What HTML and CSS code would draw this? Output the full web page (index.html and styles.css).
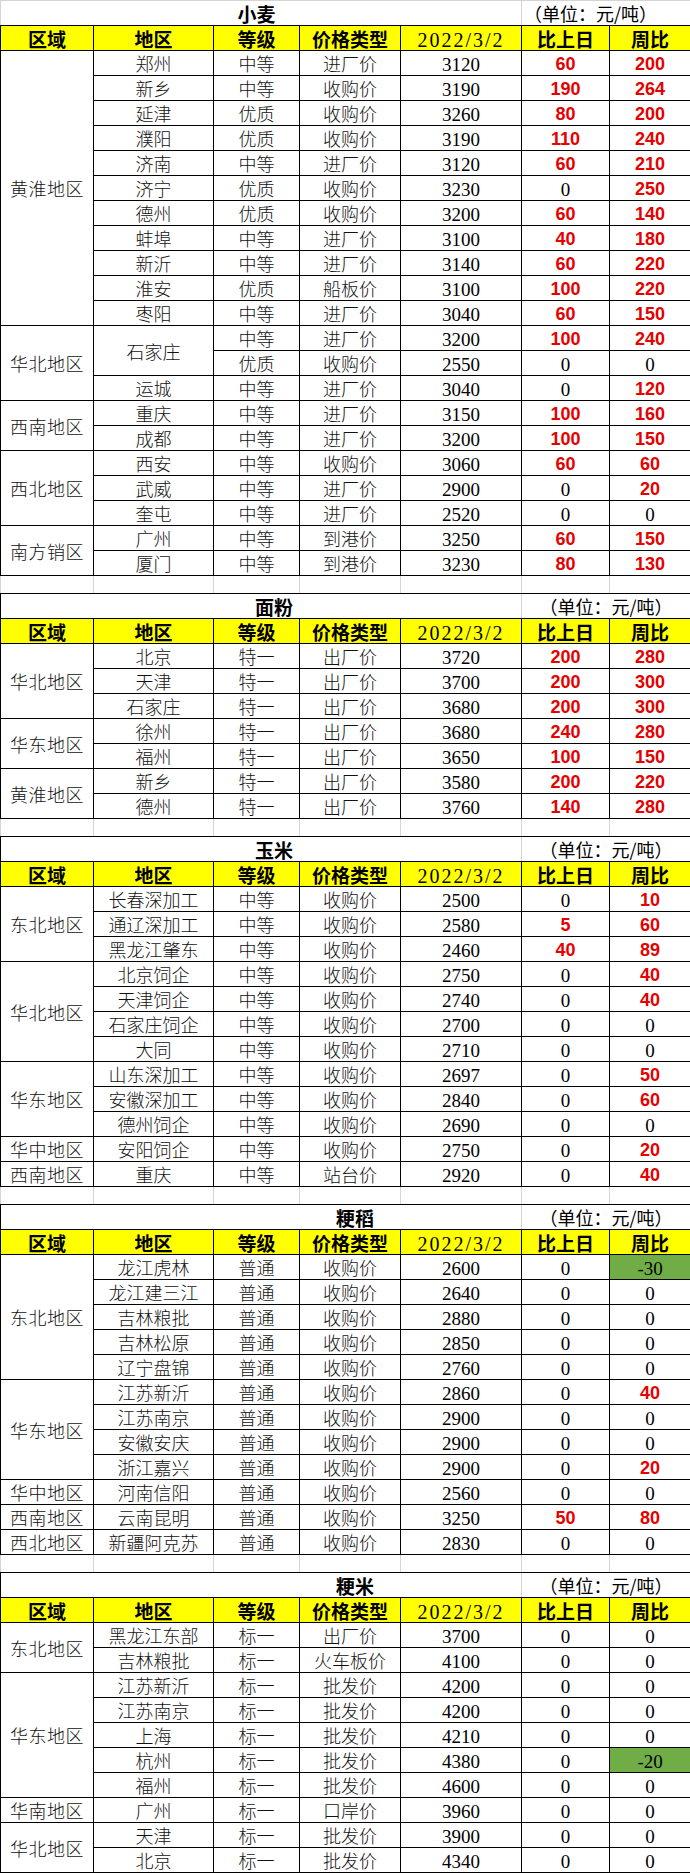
FILE: index.html
```html
<!DOCTYPE html>
<html lang="zh-CN">
<head>
<meta charset="utf-8">
<title>粮食价格</title>
<link rel="stylesheet" href="styles.css">
</head>
<body>
<table class="sheet">
<colgroup><col class="c1"><col class="c2"><col class="c3"><col class="c4"><col class="c5"><col class="c6"><col class="c7"></colgroup>
<tbody>
<tr class="title first"><td class="t t1" colspan="5">小麦</td><td class="u ul" colspan="2">（单位：元/吨）</td></tr>
<tr class="hd"><td>区域</td><td>地区</td><td>等级</td><td>价格类型</td><td class="hdate">2022/3/2</td><td>比上日</td><td>周比</td></tr>
<tr><td class="r" rowspan="11">黄淮地区</td><td>郑州</td><td>中等</td><td>进厂价</td><td class="n">3120</td><td class="up">60</td><td class="up">200</td></tr>
<tr><td>新乡</td><td>中等</td><td>收购价</td><td class="n">3190</td><td class="up">190</td><td class="up">264</td></tr>
<tr><td>延津</td><td>优质</td><td>收购价</td><td class="n">3260</td><td class="up">80</td><td class="up">200</td></tr>
<tr><td>濮阳</td><td>优质</td><td>收购价</td><td class="n">3190</td><td class="up">110</td><td class="up">240</td></tr>
<tr><td>济南</td><td>中等</td><td>进厂价</td><td class="n">3120</td><td class="up">60</td><td class="up">210</td></tr>
<tr><td>济宁</td><td>优质</td><td>收购价</td><td class="n">3230</td><td class="n">0</td><td class="up">250</td></tr>
<tr><td>德州</td><td>优质</td><td>收购价</td><td class="n">3200</td><td class="up">60</td><td class="up">140</td></tr>
<tr><td>蚌埠</td><td>中等</td><td>进厂价</td><td class="n">3100</td><td class="up">40</td><td class="up">180</td></tr>
<tr><td>新沂</td><td>中等</td><td>进厂价</td><td class="n">3140</td><td class="up">60</td><td class="up">220</td></tr>
<tr><td>淮安</td><td>优质</td><td>船板价</td><td class="n">3100</td><td class="up">100</td><td class="up">220</td></tr>
<tr><td>枣阳</td><td>中等</td><td>进厂价</td><td class="n">3040</td><td class="up">60</td><td class="up">150</td></tr>
<tr><td class="r" rowspan="3">华北地区</td><td rowspan="2">石家庄</td><td>中等</td><td>进厂价</td><td class="n">3200</td><td class="up">100</td><td class="up">240</td></tr>
<tr><td>优质</td><td>收购价</td><td class="n">2550</td><td class="n">0</td><td class="n">0</td></tr>
<tr><td>运城</td><td>中等</td><td>进厂价</td><td class="n">3040</td><td class="n">0</td><td class="up">120</td></tr>
<tr><td class="r" rowspan="2">西南地区</td><td>重庆</td><td>中等</td><td>进厂价</td><td class="n">3150</td><td class="up">100</td><td class="up">160</td></tr>
<tr><td>成都</td><td>中等</td><td>进厂价</td><td class="n">3200</td><td class="up">100</td><td class="up">150</td></tr>
<tr><td class="r" rowspan="3">西北地区</td><td>西安</td><td>中等</td><td>收购价</td><td class="n">3060</td><td class="up">60</td><td class="up">60</td></tr>
<tr><td>武威</td><td>中等</td><td>进厂价</td><td class="n">2900</td><td class="n">0</td><td class="up">20</td></tr>
<tr><td>奎屯</td><td>中等</td><td>进厂价</td><td class="n">2520</td><td class="n">0</td><td class="n">0</td></tr>
<tr><td class="r" rowspan="2">南方销区</td><td>广州</td><td>中等</td><td>到港价</td><td class="n">3250</td><td class="up">60</td><td class="up">150</td></tr>
<tr><td>厦门</td><td>中等</td><td>到港价</td><td class="n">3230</td><td class="up">80</td><td class="up">130</td></tr>
<tr class="blank"><td></td><td></td><td></td><td></td><td></td><td></td><td></td></tr>

<tr class="title"><td class="t t2" colspan="5">面粉</td><td class="u" colspan="2">（单位：元/吨）</td></tr>
<tr class="hd"><td>区域</td><td>地区</td><td>等级</td><td>价格类型</td><td class="hdate">2022/3/2</td><td>比上日</td><td>周比</td></tr>
<tr><td class="r" rowspan="3">华北地区</td><td>北京</td><td>特一</td><td>出厂价</td><td class="n">3720</td><td class="up">200</td><td class="up">280</td></tr>
<tr><td>天津</td><td>特一</td><td>出厂价</td><td class="n">3700</td><td class="up">200</td><td class="up">300</td></tr>
<tr><td>石家庄</td><td>特一</td><td>出厂价</td><td class="n">3680</td><td class="up">200</td><td class="up">300</td></tr>
<tr><td class="r" rowspan="2">华东地区</td><td>徐州</td><td>特一</td><td>出厂价</td><td class="n">3680</td><td class="up">240</td><td class="up">280</td></tr>
<tr><td>福州</td><td>特一</td><td>出厂价</td><td class="n">3650</td><td class="up">100</td><td class="up">150</td></tr>
<tr><td class="r" rowspan="2">黄淮地区</td><td>新乡</td><td>特一</td><td>出厂价</td><td class="n">3580</td><td class="up">200</td><td class="up">220</td></tr>
<tr><td>德州</td><td>特一</td><td>出厂价</td><td class="n">3760</td><td class="up">140</td><td class="up">280</td></tr>
<tr class="blank"><td></td><td></td><td></td><td></td><td></td><td></td><td></td></tr>

<tr class="title"><td class="t t2" colspan="5">玉米</td><td class="u" colspan="2">（单位：元/吨）</td></tr>
<tr class="hd"><td>区域</td><td>地区</td><td>等级</td><td>价格类型</td><td class="hdate">2022/3/2</td><td>比上日</td><td>周比</td></tr>
<tr><td class="r" rowspan="3">东北地区</td><td>长春深加工</td><td>中等</td><td>收购价</td><td class="n">2500</td><td class="n">0</td><td class="up">10</td></tr>
<tr><td>通辽深加工</td><td>中等</td><td>收购价</td><td class="n">2580</td><td class="up">5</td><td class="up">60</td></tr>
<tr><td>黑龙江肇东</td><td>中等</td><td>收购价</td><td class="n">2460</td><td class="up">40</td><td class="up">89</td></tr>
<tr><td class="r" rowspan="4">华北地区</td><td>北京饲企</td><td>中等</td><td>收购价</td><td class="n">2750</td><td class="n">0</td><td class="up">40</td></tr>
<tr><td>天津饲企</td><td>中等</td><td>收购价</td><td class="n">2740</td><td class="n">0</td><td class="up">40</td></tr>
<tr><td>石家庄饲企</td><td>中等</td><td>收购价</td><td class="n">2700</td><td class="n">0</td><td class="n">0</td></tr>
<tr><td>大同</td><td>中等</td><td>收购价</td><td class="n">2710</td><td class="n">0</td><td class="n">0</td></tr>
<tr><td class="r" rowspan="3">华东地区</td><td>山东深加工</td><td>中等</td><td>收购价</td><td class="n">2697</td><td class="n">0</td><td class="up">50</td></tr>
<tr><td>安徽深加工</td><td>中等</td><td>收购价</td><td class="n">2840</td><td class="n">0</td><td class="up">60</td></tr>
<tr><td>德州饲企</td><td>中等</td><td>收购价</td><td class="n">2690</td><td class="n">0</td><td class="n">0</td></tr>
<tr><td class="r">华中地区</td><td>安阳饲企</td><td>中等</td><td>收购价</td><td class="n">2750</td><td class="n">0</td><td class="up">20</td></tr>
<tr><td class="r">西南地区</td><td>重庆</td><td>中等</td><td>站台价</td><td class="n">2920</td><td class="n">0</td><td class="up">40</td></tr>
<tr class="blank"><td></td><td></td><td></td><td></td><td></td><td></td><td></td></tr>

<tr class="title"><td class="t t3" colspan="5">粳稻</td><td class="u" colspan="2">（单位：元/吨）</td></tr>
<tr class="hd"><td>区域</td><td>地区</td><td>等级</td><td>价格类型</td><td class="hdate">2022/3/2</td><td>比上日</td><td>周比</td></tr>
<tr><td class="r" rowspan="5">东北地区</td><td>龙江虎林</td><td>普通</td><td>收购价</td><td class="n">2600</td><td class="n">0</td><td class="n dn">-30</td></tr>
<tr><td>龙江建三江</td><td>普通</td><td>收购价</td><td class="n">2640</td><td class="n">0</td><td class="n">0</td></tr>
<tr><td>吉林粮批</td><td>普通</td><td>收购价</td><td class="n">2880</td><td class="n">0</td><td class="n">0</td></tr>
<tr><td>吉林松原</td><td>普通</td><td>收购价</td><td class="n">2850</td><td class="n">0</td><td class="n">0</td></tr>
<tr><td>辽宁盘锦</td><td>普通</td><td>收购价</td><td class="n">2760</td><td class="n">0</td><td class="n">0</td></tr>
<tr><td class="r" rowspan="4">华东地区</td><td>江苏新沂</td><td>普通</td><td>收购价</td><td class="n">2860</td><td class="n">0</td><td class="up">40</td></tr>
<tr><td>江苏南京</td><td>普通</td><td>收购价</td><td class="n">2900</td><td class="n">0</td><td class="n">0</td></tr>
<tr><td>安徽安庆</td><td>普通</td><td>收购价</td><td class="n">2900</td><td class="n">0</td><td class="n">0</td></tr>
<tr><td>浙江嘉兴</td><td>普通</td><td>收购价</td><td class="n">2900</td><td class="n">0</td><td class="up">20</td></tr>
<tr><td class="r">华中地区</td><td>河南信阳</td><td>普通</td><td>收购价</td><td class="n">2560</td><td class="n">0</td><td class="n">0</td></tr>
<tr><td class="r">西南地区</td><td>云南昆明</td><td>普通</td><td>收购价</td><td class="n">3250</td><td class="up">50</td><td class="up">80</td></tr>
<tr><td class="r">西北地区</td><td>新疆阿克苏</td><td>普通</td><td>收购价</td><td class="n">2830</td><td class="n">0</td><td class="n">0</td></tr>
<tr class="blank"><td></td><td></td><td></td><td></td><td></td><td></td><td></td></tr>

<tr class="title"><td class="t t3" colspan="5">粳米</td><td class="u" colspan="2">（单位：元/吨）</td></tr>
<tr class="hd"><td>区域</td><td>地区</td><td>等级</td><td>价格类型</td><td class="hdate">2022/3/2</td><td>比上日</td><td>周比</td></tr>
<tr><td class="r" rowspan="2">东北地区</td><td>黑龙江东部</td><td>标一</td><td>出厂价</td><td class="n">3700</td><td class="n">0</td><td class="n">0</td></tr>
<tr><td>吉林粮批</td><td>标一</td><td>火车板价</td><td class="n">4100</td><td class="n">0</td><td class="n">0</td></tr>
<tr><td class="r" rowspan="5">华东地区</td><td>江苏新沂</td><td>标一</td><td>批发价</td><td class="n">4200</td><td class="n">0</td><td class="n">0</td></tr>
<tr><td>江苏南京</td><td>标一</td><td>批发价</td><td class="n">4200</td><td class="n">0</td><td class="n">0</td></tr>
<tr><td>上海</td><td>标一</td><td>批发价</td><td class="n">4210</td><td class="n">0</td><td class="n">0</td></tr>
<tr><td>杭州</td><td>标一</td><td>批发价</td><td class="n">4380</td><td class="n">0</td><td class="n dn">-20</td></tr>
<tr><td>福州</td><td>标一</td><td>批发价</td><td class="n">4600</td><td class="n">0</td><td class="n">0</td></tr>
<tr><td class="r">华南地区</td><td>广州</td><td>标一</td><td>口岸价</td><td class="n">3960</td><td class="n">0</td><td class="n">0</td></tr>
<tr><td class="r" rowspan="2">华北地区</td><td>天津</td><td>标一</td><td>批发价</td><td class="n">3900</td><td class="n">0</td><td class="n">0</td></tr>
<tr><td>北京</td><td>标一</td><td>批发价</td><td class="n">4340</td><td class="n">0</td><td class="n">0</td></tr>
</tbody>
</table>
</body>
</html>
```
FILE: styles.css
```css
html, body {
  margin: 0;
  padding: 0;
  background: #ffffff;
}

body {
  width: 690px;
  font-family: "Noto Sans CJK SC", sans-serif;
  font-size: 18px;
  color: #000000;
}

.sheet {
  width: 690px;
  border-collapse: collapse;
  table-layout: fixed;
}

.c1 { width: 93px; }
.c2 { width: 120px; }
.c3 { width: 86px; }
.c4 { width: 101px; }
.c5 { width: 121px; }
.c6 { width: 88px; }
.c7 { width: 81px; }

.sheet tr {
  height: 25px;
}

.sheet td {
  padding: 0;
  border: 1px solid #000000;
  text-align: center;
  vertical-align: middle;
  line-height: 1;
  white-space: nowrap;
  overflow: hidden;
  font-weight: 300;
  color: #111111;
}

.sheet td.r {
  letter-spacing: 0.5px;
}

.sheet td.n {
  font-family: "Liberation Serif", serif;
  font-weight: 400;
  font-size: 19px;
  padding-top: 3px;
  color: #000000;
}

.sheet td.up {
  font-family: "Liberation Sans", sans-serif;
  font-weight: 700;
  font-size: 18px;
  color: #e60000;
  padding-top: 2px;
}

.sheet td.dn {
  background: #70ad47;
}

/* header */
.hd td {
  background: #ffff00;
  font-weight: 700;
  font-size: 19px;
  color: #000000;
}

.hd td.hdate {
  font-family: "Liberation Serif", serif;
  font-weight: 400;
  font-size: 20px;
  letter-spacing: 2px;
  padding-top: 3px;
}

/* title rows */
.title td {
  border-left: 1px solid #000000;
  border-right: 1px solid #000000;
  border-top: 1px solid #000000;
  background: #ffffff;
  color: #000000;
}

.title td.t {
  font-weight: 700;
  font-size: 19px;
  border-right: 1px solid #d4d4d4;
}

.title td.t1 {
  padding-right: 9px;
}

.title td.t2 {
  padding-left: 26px;
}

.title td.t3 {
  padding-left: 188px;
}

.title td.u {
  font-size: 18px;
  font-weight: 400;
}

.title td.ul {
  text-align: left;
  padding-left: 2px;
}

.title.first td {
  border-top: 1px solid #d4d4d4;
}

.title.first td.t {
  border-left: 1px solid #d4d4d4;
}

/* blank spacer rows */
.sheet tr.blank {
  height: 18px;
}

.blank td {
  border-left: 1px solid #d4d4d4;
  border-right: 1px solid #d4d4d4;
  border-top: 1px solid #000000;
  border-bottom: 1px solid #000000;
}
```
